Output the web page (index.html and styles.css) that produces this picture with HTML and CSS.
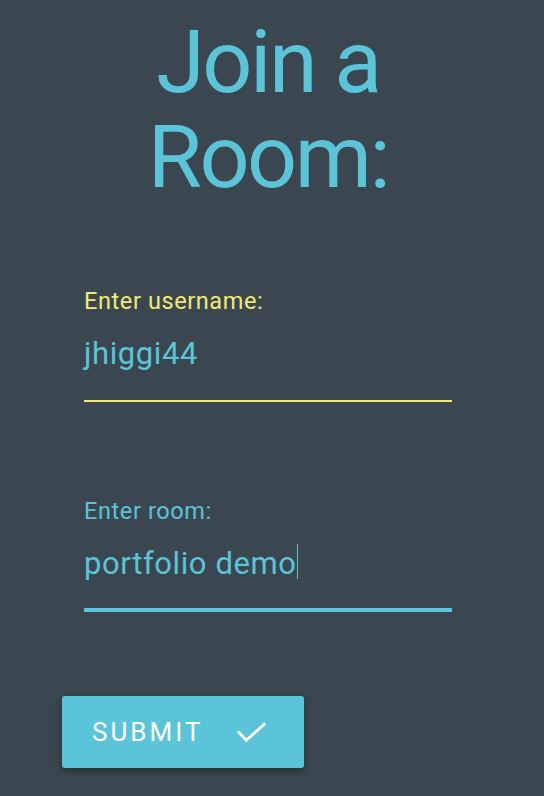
FILE: index.html
```html
<!DOCTYPE html>
<html>
<head>
<meta charset="utf-8">
<link rel="stylesheet" href="styles.css">
</head>
<body>
<main class="page">
  <h1 class="title">Join a<br>Room:</h1>
  <form class="form">
    <div class="field field-active">
      <label class="label">Enter username:</label>
      <div class="value">jhiggi44</div>
    </div>
    <div class="field field-focus">
      <label class="label">Enter room:</label>
      <div class="value">portfolio demo<span class="caret"></span></div>
    </div>
    <button type="button" class="submit">
      <span class="submit-text">SUBMIT</span>
      <svg class="check" width="32" height="24" viewBox="0 0 32 24"><polyline points="2,11.5 10.3,20.2 29.3,3.4" fill="none" stroke="#fff" stroke-width="2.8"/></svg>
    </button>
  </form>
</main>
</body>
</html>
```
FILE: styles.css
```css
html, body {
  margin: 0;
  padding: 0;
  background: #3a4750;
  height: 100%;
}
body {
  font-family: Roboto, "Liberation Sans", sans-serif;
}
.page {
  width: 544px;
  height: 796px;
  overflow: hidden;
}
.title {
  margin: 0;
  padding-top: 14px;
  width: 536px;
  text-align: center;
  font-weight: 400;
  font-size: 88px;
  line-height: 95px;
  letter-spacing: -2.5px;
  color: #5cc4d8;
}
.form {
  display: flex;
  flex-direction: column;
  padding-left: 84px;
}
.field {
  width: 368px;
  display: flex;
  flex-direction: column;
}
.field-active {
  margin-top: 83px;
  padding-bottom: 26px;
  border-bottom: 2px solid #f4e976;
}
.field-focus {
  margin-top: 95px;
  padding-bottom: 24px;
  border-bottom: 4px solid #5cc4d8;
}
.label {
  font-size: 23.5px;
  line-height: 28px;
  letter-spacing: 0.6px;
}
.field-active .label { color: #f4e976; }
.field-focus .label { color: #5cc4d8; }
.value {
  margin-top: 19px;
  height: 40px;
  font-size: 31px;
  line-height: 40px;
  letter-spacing: 0.6px;
  color: #5cc4d8;
}
.caret {
  display: inline-block;
  width: 1.5px;
  height: 35px;
  margin-left: 0;
  background: #5cc4d8;
  vertical-align: -5px;
}
.submit {
  margin-top: 84px;
  margin-left: -22px;
  width: 242px;
  height: 72px;
  display: flex;
  align-items: center;
  padding: 0 0 0 30px;
  border: none;
  border-radius: 3px;
  background: #5cc4d8;
  color: #fff;
  font-family: Roboto, "Liberation Sans", sans-serif;
  font-size: 26px;
  letter-spacing: 3px;
  box-shadow: 0 3px 7px rgba(0,0,0,0.35);
}
.submit-text {
  line-height: 30px;
}
.check {
  display: block;
  margin-left: 33px;
}
```
